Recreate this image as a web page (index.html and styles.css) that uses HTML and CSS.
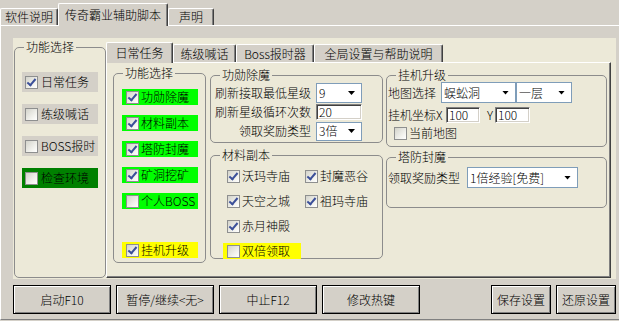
FILE: index.html
```html
<!DOCTYPE html>
<html lang="zh-CN">
<head>
  <meta charset="UTF-8">
  <title>传奇霸业辅助脚本</title>
  <link rel="stylesheet" href="styles.css">
</head>
<body>

<div class="tabs">
  <div class="tab t-help">软件说明</div>
  <div class="tab t-main on">传奇霸业辅助脚本</div>
  <div class="tab t-note">声明</div>
</div>

<div class="page">
  <div class="pane">
    <fieldset class="grp side">
      <legend>功能选择</legend>
      <div class="side-list">
        <div class="opt"><span class="cb on"></span>日常任务</div>
        <div class="opt"><span class="cb"></span>练级喊话</div>
        <div class="opt"><span class="cb"></span>BOSS报时</div>
        <div class="opt env"><span class="cb"></span>检查环境</div>
      </div>
    </fieldset>

    <div class="itab">
      <div class="itabs">
        <div class="it on w1">日常任务</div>
        <div class="it w2">练级喊话</div>
        <div class="it w3">Boss报时器</div>
        <div class="it w4">全局设置与帮助说明</div>
      </div>
      <div class="ipage">
        <fieldset class="grp c1">
          <legend>功能选择</legend>
          <div class="fn-list">
            <div class="bar green"><span class="cb on"></span>功勋除魔</div>
            <div class="bar green"><span class="cb on"></span>材料副本</div>
            <div class="bar green"><span class="cb on"></span>塔防封魔</div>
            <div class="bar green"><span class="cb on"></span>矿洞挖矿</div>
            <div class="bar green"><span class="cb"></span>个人BOSS</div>
            <div class="bar yellow last"><span class="cb on"></span>挂机升级</div>
          </div>
        </fieldset>

        <div class="col c2">
          <fieldset class="grp g-xm">
            <legend>功勋除魔</legend>
            <div class="xm">
              <div class="frow r1"><span class="lab">刷新接取最低星级</span><div class="sel s-star"><span>9</span></div></div>
              <div class="frow r2"><span class="lab">刷新星级循环次数</span><div class="inp i-loop">20</div></div>
              <div class="frow r3"><span class="lab">领取奖励类型</span><div class="sel s-bonus"><span>3倍</span></div></div>
            </div>
          </fieldset>
          <fieldset class="grp g-cl">
            <legend>材料副本</legend>
            <div class="cl">
              <div class="chk"><span class="cb on"></span>沃玛寺庙</div>
              <div class="chk"><span class="cb on"></span>封魔恶谷</div>
              <div class="chk"><span class="cb on"></span>天空之城</div>
              <div class="chk"><span class="cb on"></span>祖玛寺庙</div>
              <div class="chk"><span class="cb on"></span>赤月神殿</div>
              <div></div>
              <div class="chk yellow"><span class="cb"></span>双倍领取</div>
            </div>
          </fieldset>
        </div>

        <div class="col c3">
          <fieldset class="grp g-gj">
            <legend>挂机升级</legend>
            <div class="gj">
              <div class="frow g1">
                <span class="glab">地图选择</span>
                <div class="sel s-map"><span>蜈蚣洞</span></div>
                <div class="sel s-floor"><span>一层</span></div>
              </div>
              <div class="frow g2">
                <span class="xl">挂机坐标X</span>
                <div class="inp i-x">100</div>
                <span class="yl">Y</span>
                <div class="inp i-y">100</div>
              </div>
              <div class="frow g3"><span class="cb"></span>当前地图</div>
            </div>
          </fieldset>
          <fieldset class="grp g-tf">
            <legend>塔防封魔</legend>
            <div class="tf">
              <div class="frow t1"><span class="tlab">领取奖励类型</span><div class="sel s-tf"><span>1倍经验[免费]</span></div></div>
            </div>
          </fieldset>
        </div>
      </div>
    </div>
  </div>

  <div class="btns">
    <div class="btn">启动F10</div>
    <div class="btn">暂停/继续&lt;无&gt;</div>
    <div class="btn">中止F12</div>
    <div class="btn">修改热键</div>
    <div class="btn small push">保存设置</div>
    <div class="btn small">还原设置</div>
  </div>
</div>

</body>
</html>
```

FILE: styles.css
```css
body {
  margin: 0;
  width: 619px;
  height: 321px;
  overflow: hidden;
  background: #d4d0c8;
  color: #000;
  font-family: "SimSun", "Noto Sans CJK SC", sans-serif;
  font-size: 12px;
  font-weight: 300;
  line-height: 14px;
}

/* top tabs */
.tabs {
  display: flex;
  align-items: flex-end;
  height: 25px;
}
.tab, .it {
  box-sizing: border-box;
  border: 1px solid #fff;
  border-bottom: none;
  border-right-color: #404040;
  border-radius: 2px 2px 0 0;
  box-shadow: inset -1px 0 #808080;
  display: flex;
  align-items: center;
  justify-content: center;
  background: #d4d0c8;
}
.tab { height: 17px; }
.tab.on {
  height: 23px;
  margin-bottom: -1px;
  position: relative;
  z-index: 1;
}
.t-help { width: 58px; }
.t-main { width: 110px; }
.t-note { width: 46px; }

.page {
  height: 293px;
  border-top: 1px solid #fff;
  border-left: 1px solid #fff;
  border-bottom: 1px solid #808080;
}

.pane {
  margin: 12px 0 0 12px;
  width: 603px;
  height: 241px;
  box-sizing: border-box;
  padding: 0 5px 0 1px;
  background: #ece9d8;
  display: flex;
  align-items: flex-start;
}

/* group boxes */
.grp {
  margin: 0;
  padding: 0;
  min-width: 0;
  box-sizing: border-box;
  border: 1px solid #8c8c8c;
  border-radius: 5px;
}
.grp legend {
  margin-left: 9px;
  padding: 0 2px;
  line-height: 14px;
}

.side {
  width: 92px;
  height: 238px;
  margin-top: 2px;
}
.side-list {
  display: flex;
  flex-direction: column;
  gap: 12px;
  padding: 18px 0 0 7px;
}
.opt {
  display: flex;
  align-items: center;
  gap: 3px;
  width: 76px;
  height: 20px;
  box-sizing: border-box;
  padding-left: 3px;
  background: #d4d0c8;
  white-space: nowrap;
}
.opt.env { background: #008000; }

/* checkbox */
.cb {
  position: relative;
  flex: none;
  width: 13px;
  height: 13px;
  box-sizing: border-box;
  border: 1px solid #8e8f8f;
  background: linear-gradient(135deg, #d3d3cb, #f4f4f0 70%, #fff);
}
.cb.on::after {
  content: '';
  position: absolute;
  left: 3px;
  top: 0;
  width: 3px;
  height: 7px;
  border: solid #3b4f99;
  border-width: 0 2px 2px 0;
  transform: rotate(40deg);
}

/* inner tabs */
.itab {
  width: 505px;
  margin-top: 3px;
}
.itabs {
  display: flex;
  align-items: flex-end;
  height: 21px;
}
.it { height: 18px; }
.it.on {
  height: 21px;
  margin-bottom: -1px;
  position: relative;
  z-index: 1;
}
.w1 { width: 67px; }
.w2 { width: 63px; }
.w3 { width: 78px; }
.w4 { width: 129px; }

.ipage {
  height: 216px;
  box-sizing: border-box;
  border: 1px solid #fff;
  border-right-color: #404040;
  border-bottom-color: #404040;
  box-shadow: inset -1px -1px #808080;
  padding-left: 6px;
  display: flex;
  align-items: flex-start;
}

.c1 {
  width: 93px;
  height: 197px;
  margin-top: 3px;
}
.fn-list {
  display: flex;
  flex-direction: column;
  gap: 10px;
  padding: 9px 0 0 8px;
}
.bar {
  display: flex;
  align-items: center;
  gap: 2px;
  width: 76px;
  height: 16px;
  box-sizing: border-box;
  padding-left: 4px;
  white-space: nowrap;
}
.bar.last { margin-top: 23px; }
.green { background: #00ff00; }
.yellow { background: #ffff00; }

.col {
  display: flex;
  flex-direction: column;
  margin-top: 5px;
}
.c2 { width: 173px; margin-left: 4px; }
.c3 { width: 221px; margin-left: 3px; }

.g-xm { height: 75px; }
.g-cl { height: 111px; margin-top: 5px; }
.g-gj { height: 79px; }
.g-tf { height: 58px; margin-top: 3px; }

.frow {
  display: flex;
  align-items: center;
  white-space: nowrap;
}

.xm { padding: 1px 0 0 4px; }
.xm .r1 { height: 20px; }
.xm .r2 { height: 18px; }
.xm .r3 { height: 20px; }
.lab {
  width: 96px;
  text-align: right;
  margin-right: 5px;
}

/* combo boxes and edits */
.sel {
  display: flex;
  align-items: center;
  box-sizing: border-box;
  background: #fff;
  border: 1px solid #7f9db9;
  padding: 0 6px 0 2px;
}
.sel span { flex: 1; }
.sel::after {
  content: '';
  width: 7px;
  height: 4px;
  background: #000;
  clip-path: polygon(0 0, 100% 0, 50% 100%);
}
.inp {
  display: flex;
  align-items: center;
  box-sizing: border-box;
  background: #fff;
  border: 1px solid;
  border-color: #808080 #fff #fff #808080;
  box-shadow: inset 1px 1px #404040, inset -1px -1px #d4d0c8;
  padding-left: 2px;
}

.s-star { width: 46px; height: 20px; }
.i-loop { width: 46px; height: 16px; }
.s-bonus { width: 46px; height: 19px; }

.cl {
  display: grid;
  grid-template-columns: 78px 78px;
  grid-auto-rows: 16px;
  row-gap: 9px;
  padding: 6px 0 0 12px;
}
.chk {
  display: flex;
  align-items: center;
  gap: 2px;
  padding-left: 4px;
  white-space: nowrap;
}

.gj { padding-left: 1px; }
.g1 { height: 21px; }
.glab { margin-right: 5px; }
.s-map { width: 75px; height: 21px; }
.s-floor { width: 56px; height: 21px; }
.g2 { height: 16px; margin-top: 4px; }
.xl { width: 58px; }
.i-x { width: 34px; height: 16px; }
.yl {
  width: 15px;
  box-sizing: border-box;
  padding-right: 2px;
  text-align: right;
}
.i-y { width: 35px; height: 16px; }
.g3 { height: 16px; margin-top: 2px; gap: 2px; }
.g3 .cb { margin-left: 6px; }

.tf { padding: 3px 0 0 1px; }
.t1 { height: 21px; }
.tlab { margin-right: 7px; }
.s-tf { width: 111px; height: 21px; }

/* bottom buttons */
.btns {
  display: flex;
  gap: 5px;
  width: 603px;
  margin: 6px 0 0 12px;
}
.btn {
  width: 98px;
  height: 29px;
  box-sizing: border-box;
  border: 1px solid #000;
  box-shadow: inset 1px 1px #fff, inset -1px -1px #808080;
  display: flex;
  align-items: center;
  justify-content: center;
  white-space: nowrap;
}
.btn.small { width: 60px; }
.btn.push { margin-left: auto; }
```
